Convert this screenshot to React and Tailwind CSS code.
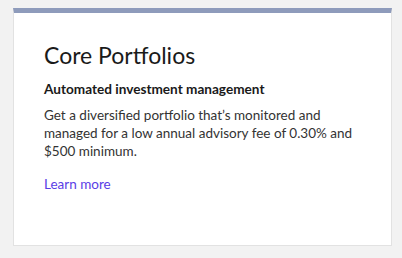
export default function App() {
  return (
    <div className="min-h-[258px] bg-[#f2f2f2] pt-2 px-[13px]" style={{ fontFamily: 'Lato, "Liberation Sans", sans-serif' }}>
      <div className="w-[379px] h-[238px] bg-white border-t-[5px] border-t-[#8e9bbb] border-x border-b border-x-[#e2e2e2] border-b-[#e2e2e2] px-[30px] pt-[26px]">
        <h2 className="text-[23px] leading-[32px] text-[#1a1a1a]">Core Portfolios</h2>
        <p className="mt-[9px] text-[13.6px] leading-[18px] font-bold text-[#1a1a1a]">Automated investment management</p>
        <p className="mt-[8px] text-[13.5px] leading-[18px] text-[#333]">
          Get a diversified portfolio that’s monitored and managed for a low annual advisory fee of 0.30% and $500 minimum.
        </p>
        <a href="#" className="block mt-[15px] text-[13.5px] leading-[18px] text-[#5a3de6]">Learn more</a>
      </div>
    </div>
  )
}
